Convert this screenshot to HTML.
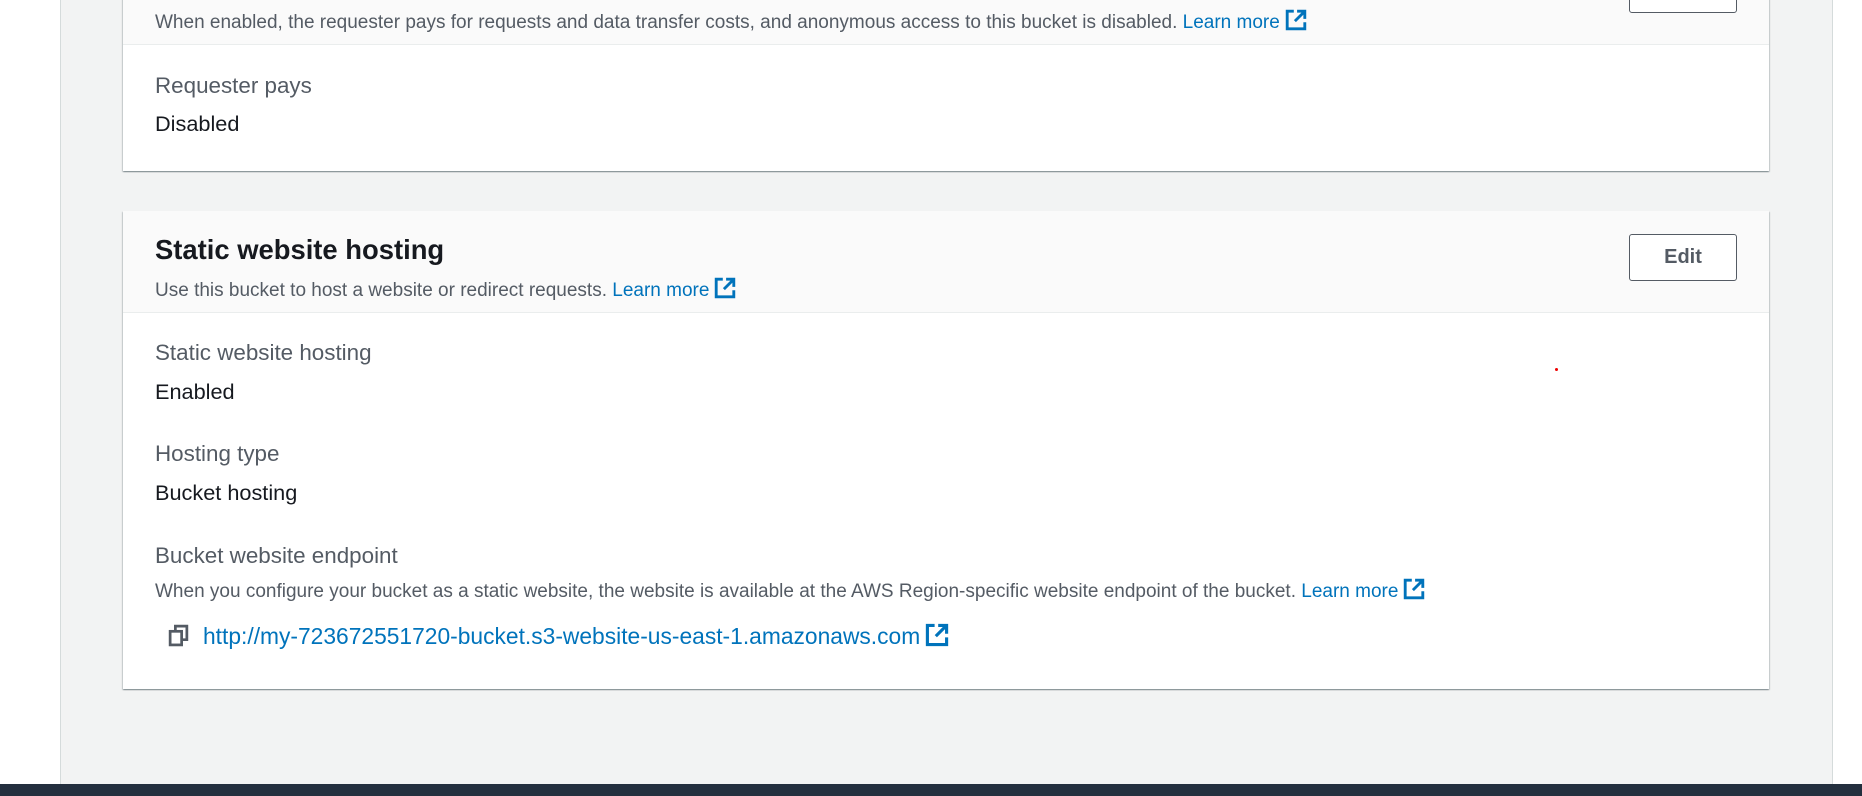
<!DOCTYPE html>
<html><head><meta charset="utf-8"><style>
*{margin:0;padding:0;box-sizing:border-box}
body{width:1862px;height:796px;overflow:hidden;background:#fff;font-family:"Liberation Sans",sans-serif;position:relative}
.main{position:absolute;left:60px;top:0;width:1773px;height:784px;background:#f2f3f3;border-left:1px solid #d5dbdb;border-right:1px solid #d5dbdb}
.foot{position:absolute;left:0;top:784px;width:1862px;height:12px;background:#232f3e}
.card{position:absolute;left:123px;width:1646px;background:#fff;box-shadow:0 1px 1px rgba(0,28,36,.3),1px 1px 1px rgba(0,28,36,.15),-1px 1px 1px rgba(0,28,36,.15)}
.hdr{position:absolute;left:0;width:100%;background:#fafafa;border-bottom:1px solid #eaeded}
.t{position:absolute;left:32px;white-space:nowrap;line-height:1}
.desc{font-size:19px;color:#545b64}
.lab{font-size:22.4px;color:#545b64}
.val{font-size:21.7px;color:#16191f}
a{color:#0073bb;text-decoration:none}
.ext{display:inline-block;vertical-align:-3px;margin-left:5px}
.btn{position:absolute;width:108px;height:47px;border:1px solid #545b64;border-radius:3px;background:#fff;color:#545b64;font-weight:bold;font-size:20px;text-align:center;line-height:45px}
</style></head><body>
<div class="main"></div>
<div class="foot"></div>

<div class="card" style="top:-10px;height:181px">
  <div class="hdr" style="top:0;height:55px"></div>
  <div class="btn" style="left:1506px;top:-24px"></div>
  <div class="t desc" style="top:19px">When enabled, the requester pays for requests and data transfer costs, and anonymous access to this bucket is disabled. <a>Learn more<svg class="ext" width="22" height="22" viewBox="0 0 20 20"><path d="M8 2H2v16h16v-6" fill="none" stroke="#0073bb" stroke-width="2.6"/><path d="M11 2h7v7M18 2 9 11" fill="none" stroke="#0073bb" stroke-width="2.6"/></svg></a></div>
  <div class="t lab" style="top:85px">Requester pays</div>
  <div class="t val" style="top:123px">Disabled</div>
</div>

<div class="card" style="top:211px;height:478px">
  <div class="hdr" style="top:0;height:102px"></div>
  <div class="t" style="top:25px;font-size:27.4px;font-weight:bold;color:#16191f">Static website hosting</div>
  <div class="t desc" style="top:66px">Use this bucket to host a website or redirect requests. <a>Learn more<svg class="ext" width="22" height="22" viewBox="0 0 20 20"><path d="M8 2H2v16h16v-6" fill="none" stroke="#0073bb" stroke-width="2.6"/><path d="M11 2h7v7M18 2 9 11" fill="none" stroke="#0073bb" stroke-width="2.6"/></svg></a></div>
  <div class="btn" style="left:1506px;top:23px">Edit</div>
  <div class="t lab" style="top:131px">Static website hosting</div>
  <div class="t val" style="top:170px">Enabled</div>
  <div class="t lab" style="top:232px">Hosting type</div>
  <div class="t val" style="top:271px">Bucket hosting</div>
  <div class="t lab" style="top:334px">Bucket website endpoint</div>
  <div class="t desc" style="top:367px">When you configure your bucket as a static website, the website is available at the AWS Region-specific website endpoint of the bucket. <a>Learn more<svg class="ext" width="22" height="22" viewBox="0 0 20 20"><path d="M8 2H2v16h16v-6" fill="none" stroke="#0073bb" stroke-width="2.6"/><path d="M11 2h7v7M18 2 9 11" fill="none" stroke="#0073bb" stroke-width="2.6"/></svg></a></div>
  <svg style="position:absolute;left:45px;top:413px" width="21" height="23" viewBox="0 0 20 22"><rect x="2" y="7" width="11" height="13" fill="none" stroke="#545b64" stroke-width="2.6"/><path d="M7 6V2h11v13h-4" fill="none" stroke="#545b64" stroke-width="2.6"/></svg>
  <div class="t" style="left:80px;top:412px;font-size:22.8px"><a>http://my-723672551720-bucket.s3-website-us-east-1.amazonaws.com<svg class="ext" width="24" height="24" viewBox="0 0 20 20"><path d="M8 2H2v16h16v-6" fill="none" stroke="#0073bb" stroke-width="2.6"/><path d="M11 2h7v7M18 2 9 11" fill="none" stroke="#0073bb" stroke-width="2.6"/></svg></a></div>
</div>
<div style="position:absolute;left:1555px;top:368px;width:3px;height:3px;background:#e00;border-radius:50%"></div>
</body></html>
